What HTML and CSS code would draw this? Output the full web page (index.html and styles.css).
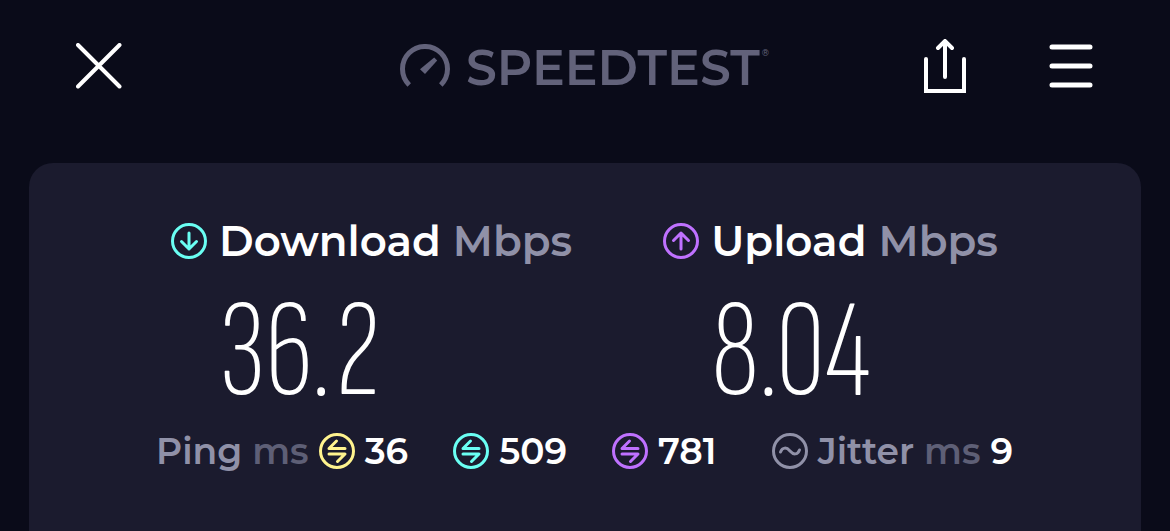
FILE: index.html
```html
<!DOCTYPE html>
<html lang="en">
<head>
    <meta charset="UTF-8">
    <meta name="viewport" content="width=device-width, initial-scale=1.0">
    <title>Speedtest</title>
    <link rel="stylesheet" href="styles.css">
</head>
<body>

    <header class="topbar">
        <button class="icon-button" aria-label="Close">
            <svg width="46" height="46" viewBox="0 0 46 46" stroke-width="4">
                <path d="M2 2L43.5 43.5M43.5 2L2 43.5"/>
            </svg>
        </button>

        <h1 class="logo">
            <svg width="50" height="44" viewBox="0 0 50 44">
                <path d="M9.2 41A22.5 22.5 0 1 1 40.8 41" stroke-width="5"/>
                <path class="needle" d="M20 25.2L34.2 13.4L37.2 16.4L25 30Z"/>
            </svg>
            <span>SPEEDTEST</span><sup>®</sup>
        </h1>

        <div class="topbar-actions">
            <button class="icon-button" aria-label="Share">
                <svg width="42" height="54" viewBox="0 0 42 54" stroke-width="4">
                    <path d="M2 20V52H40V20M21 38V3M14 9L21 2L28 9"/>
                </svg>
            </button>
            <button class="icon-button" aria-label="Menu">
                <svg width="44" height="44" viewBox="0 0 44 44" stroke-width="5">
                    <path d="M3 3H41M3 22H41M3 41H41"/>
                </svg>
            </button>
        </div>
    </header>

    <main class="card">
        <div class="speeds">
            <section class="speed">
                <h2>
                    <svg class="badge download" viewBox="0 0 36 36">
                        <circle cx="18" cy="18" r="16.5"/>
                        <path d="M18 10V26M10.5 18.5L18 26L25.5 18.5"/>
                    </svg>
                    Download <span class="unit">Mbps</span>
                </h2>
                <p class="speed-value">36.2</p>
            </section>
            <section class="speed">
                <h2>
                    <svg class="badge upload" viewBox="0 0 36 36">
                        <circle cx="18" cy="18" r="16.5"/>
                        <path d="M18 26V10M10.5 17.5L18 10L25.5 17.5"/>
                    </svg>
                    Upload <span class="unit">Mbps</span>
                </h2>
                <p class="speed-value">8.04</p>
            </section>
        </div>

        <div class="latency">
            <div class="stat">
                <span class="label">Ping <span class="ms">ms</span></span>
                <svg class="badge idle" viewBox="0 0 36 36">
                    <circle cx="18" cy="18" r="16.5"/>
                    <path d="M26 15.5H10L17.5 8M10 21H26L18.5 28.5"/>
                </svg>
                <span>36</span>
            </div>
            <div class="stat">
                <svg class="badge download" viewBox="0 0 36 36">
                    <circle cx="18" cy="18" r="16.5"/>
                    <path d="M26 15.5H10L17.5 8M10 21H26L18.5 28.5"/>
                </svg>
                <span>509</span>
            </div>
            <div class="stat">
                <svg class="badge upload" viewBox="0 0 36 36">
                    <circle cx="18" cy="18" r="16.5"/>
                    <path d="M26 15.5H10L17.5 8M10 21H26L18.5 28.5"/>
                </svg>
                <span>781</span>
            </div>
            <div class="stat stat-jitter">
                <svg class="badge jitter" viewBox="0 0 36 36">
                    <circle cx="18" cy="18" r="16.5"/>
                    <path d="M8.5 19C10.5 14 14.5 14 18 18C21.5 22 25.5 22 27.5 17"/>
                </svg>
                <span class="label">Jitter <span class="ms">ms</span></span>
                <span>9</span>
            </div>
        </div>
    </main>

</body>
</html>
```
FILE: styles.css
```css
* {
    box-sizing: border-box;
}

body {
    display: flex;
    flex-direction: column;
    min-height: 100vh;
    margin: 0;
    background-color: #0a0b19;
    color: #ffffff;
    font-family: 'Montserrat', 'Inter', sans-serif;
    font-weight: 600;
}

h1, h2, p {
    margin: 0;
}

svg {
    display: block;
    flex: none;
    fill: none;
    stroke: currentColor;
    stroke-linecap: round;
}

/* Top bar */
.topbar {
    display: grid;
    grid-template-columns: 1fr auto 1fr;
    align-items: center;
    padding: 39px 77px 70px 76px;
}

.icon-button {
    justify-self: start;
    padding: 0;
    background: none;
    border: none;
    color: #ffffff;
    cursor: pointer;
}

.topbar-actions {
    display: flex;
    align-items: center;
    justify-content: flex-end;
    gap: 83px;
}

.logo {
    display: flex;
    align-items: center;
    color: #62627a;
    font-size: 49px;
    font-weight: 600;
    line-height: 50px;
}

.logo svg {
    margin-right: 16px;
    stroke-linecap: butt;
}

.logo span {
    padding-top: 4px;
}

.logo .needle {
    fill: currentColor;
    stroke: none;
}

.logo sup {
    align-self: flex-start;
    margin-left: 2px;
    font-size: 9px;
    font-weight: 500;
    line-height: 28px;
}

/* Results card */
.card {
    flex: 1;
    margin: 0 29px;
    padding: 54px 0;
    background-color: #1b1b2e;
    border-radius: 24px 24px 0 0;
}

.speeds {
    display: flex;
    gap: 91px;
    padding-left: 142px;
}

.speed h2 {
    display: flex;
    align-items: center;
    gap: 12px;
    font-size: 42px;
    font-weight: 600;
    line-height: 48px;
    white-space: nowrap;
}

.unit, .label {
    color: #9091a8;
}

.ms {
    color: #5e5f76;
}

.speed-value {
    padding: 16px 0 0 48px;
    font-family: 'Sofia Sans Extra Condensed', 'Barlow Condensed', 'Roboto Condensed', sans-serif;
    font-size: 140px;
    font-weight: 200;
    line-height: 144px;
}

.badge {
    width: 36px;
    height: 36px;
    stroke-width: 3;
    stroke-linejoin: round;
}

.download {
    color: #6afff3;
}

.upload {
    color: #bf71ff;
}

.idle {
    color: #fff38e;
}

.jitter {
    color: #9091a8;
}

/* Ping and jitter */
.latency {
    display: flex;
    gap: 45px;
    padding: 4px 128px 0 127px;
    font-size: 36px;
    line-height: 44px;
    white-space: nowrap;
}

.stat {
    display: flex;
    align-items: center;
    gap: 10px;
}

.stat-jitter {
    margin-left: auto;
}
```
